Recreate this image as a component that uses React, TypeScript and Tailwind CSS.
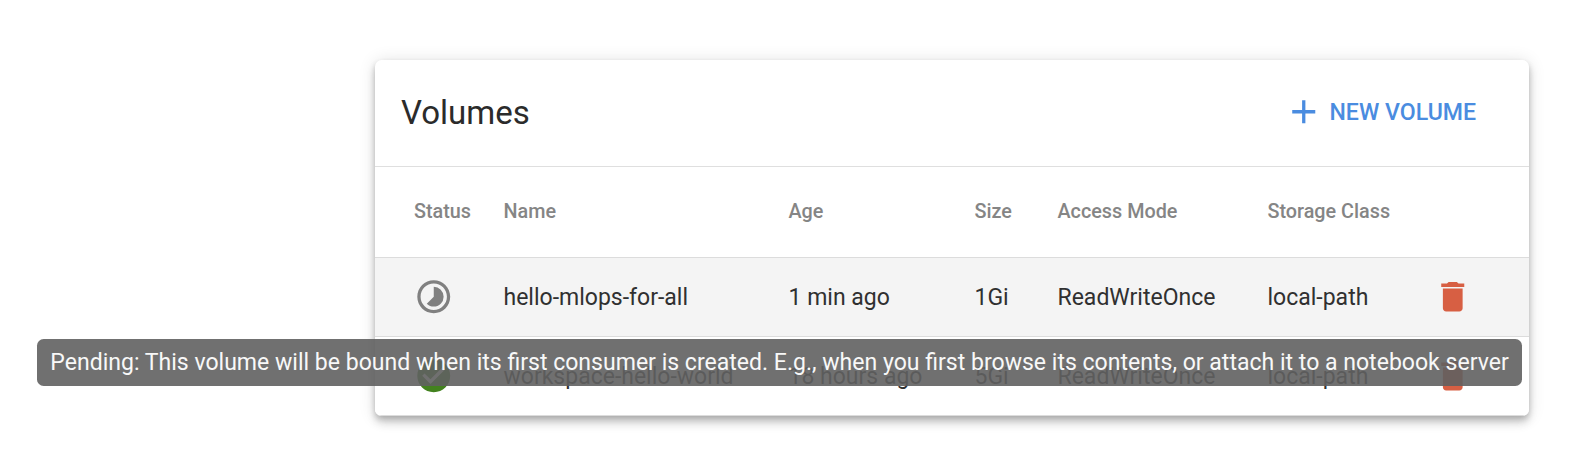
import { MdAdd, MdCheckCircle, MdDelete, MdTimelapse } from "react-icons/md";

type Volume = {
  status: "pending" | "ready";
  name: string;
  age: string;
  size: string;
  mode: string;
  storageClass: string;
};

const volumes: Volume[] = [
  { status: "pending", name: "hello-mlops-for-all", age: "1 min ago", size: "1Gi", mode: "ReadWriteOnce", storageClass: "local-path" },
  { status: "ready", name: "workspace-hello-world", age: "18 hours ago", size: "5Gi", mode: "ReadWriteOnce", storageClass: "local-path" },
];

const columns = "grid grid-cols-[89.5px_285px_186px_83px_210px_165px_1fr] items-center pl-[39.5px]";

function StatusIcon({ status }: { status: Volume["status"] }) {
  return status === "pending" ? (
    <MdTimelapse className="size-[39.5px] text-[#808080]" />
  ) : (
    <MdCheckCircle className="size-[39.5px] text-[#43821f]" />
  );
}

function VolumeRow({ volume }: { volume: Volume }) {
  const background = volume.status === "pending" ? "bg-[#f4f4f4]" : "bg-white";
  return (
    <div className={`${columns} h-[79px] border-b border-[#dcdcdc] text-[23px] text-[#303030] ${background}`}>
      <StatusIcon status={volume.status} />
      <span className="pt-[2px]">{volume.name}</span>
      <span className="pt-[2px]">{volume.age}</span>
      <span className="pt-[2px]">{volume.size}</span>
      <span className="pt-[2px]">{volume.mode}</span>
      <span className="pt-[2px]">{volume.storageClass}</span>
      <MdDelete className="size-[39.5px] text-[#d75f43]" />
    </div>
  );
}

export default function App() {
  return (
    <div className="relative h-[450px] w-[1572px] overflow-hidden bg-white pt-[60px] pl-[374.5px] font-[Roboto,sans-serif]">
      <section className="w-[1154px] overflow-hidden rounded-[6.6px] bg-white shadow-[0_3.3px_6.6px_-1.65px_rgba(0,0,0,0.2),0_6.6px_8.25px_0_rgba(0,0,0,0.14),0_1.65px_16.5px_0_rgba(0,0,0,0.12)]">
        <header className="flex h-[107px] items-center justify-between border-b border-[#dfdfdf] pr-[52.5px] pl-[26.5px]">
          <h1 className="text-[33px] text-[#2b2b2b]">Volumes</h1>
          <button className="flex items-center gap-[6px] text-[23.1px] font-medium text-[#4a8ce0]">
            <MdAdd className="mb-[2px] size-[39.5px]" />
            <span>NEW VOLUME</span>
          </button>
        </header>
        <div className={`${columns} h-[91px] border-b border-[#dcdcdc] pb-[1px] text-[19.8px] font-medium text-[#858585]`}>
          <span>Status</span>
          <span>Name</span>
          <span>Age</span>
          <span>Size</span>
          <span>Access Mode</span>
          <span>Storage Class</span>
        </div>
        {volumes.map((volume) => (
          <VolumeRow key={volume.name} volume={volume} />
        ))}
      </section>
      <div
        role="tooltip"
        className="absolute top-[339px] left-[37px] flex h-[47px] w-[1485px] items-center rounded-[6.6px] bg-[#616161]/90 pt-[2px] pl-[13.3px] text-[23.05px] whitespace-nowrap text-[#f8f8f8]"
      >
        Pending: This volume will be bound when its first consumer is created. E.g., when you first browse its contents, or attach it to a notebook server
      </div>
    </div>
  );
}
